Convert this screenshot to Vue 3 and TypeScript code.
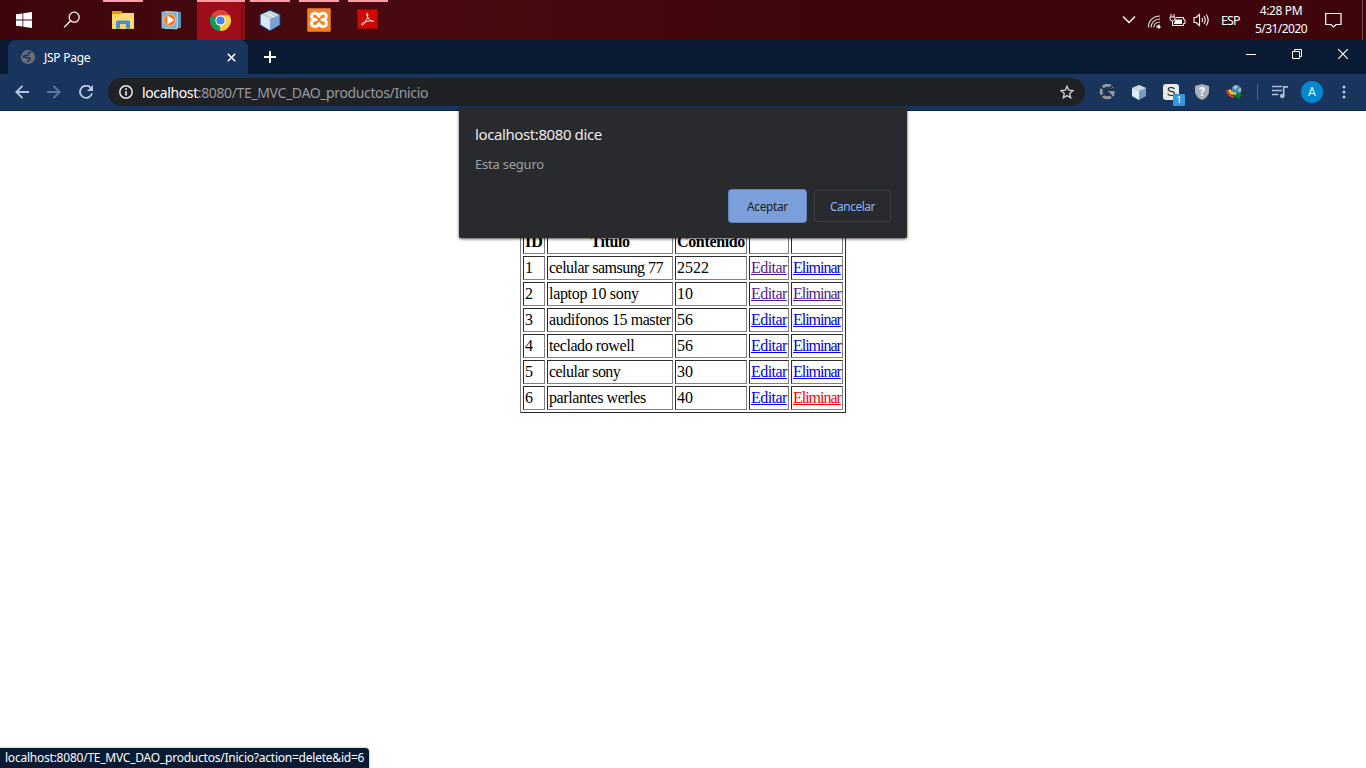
<script setup lang="ts">
interface Product {
  id: number
  title: string
  content: string
  edit: string
  remove: string
}

const products: Product[] = [
  { id: 1, title: 'celular samsung 77', content: '2522', edit: 'visited', remove: 'link' },
  { id: 2, title: 'laptop 10 sony', content: '10', edit: 'visited', remove: 'visited' },
  { id: 3, title: 'audifonos 15 master', content: '56', edit: 'link', remove: 'link' },
  { id: 4, title: 'teclado rowell', content: '56', edit: 'link', remove: 'link' },
  { id: 5, title: 'celular sony', content: '30', edit: 'link', remove: 'link' },
  { id: 6, title: 'parlantes werles', content: '40', edit: 'link', remove: 'active' },
]
</script>

<template>
  <div class="screen">
    <header class="taskbar">
      <div class="task start">
        <svg width="16" height="16" viewBox="0 0 16 16" fill="#fff"><path d="M0 2.3 6.5 1.4V7.5H0zM7.3 1.3 16 0V7.5H7.3zM0 8.4H6.5V14.6L0 13.7zM7.3 8.4H16V16L7.3 14.8z" /></svg>
      </div>
      <div class="task find">
        <svg width="18" height="18" viewBox="0 0 18 18" fill="none" stroke="#fff" stroke-width="1.3"><circle cx="11.2" cy="6.2" r="5" /><path d="M7.5 9.8 1.2 16.4" /></svg>
      </div>
      <div class="task open">
        <svg width="22" height="20" viewBox="0 0 22 20">
          <path d="M0 1H9l1.5 2H22v16H0z" fill="#f6c443" /><path d="M0 1H9l1.5 2L9 4H0z" fill="#e3a000" /><path d="M0 4.5H9L11 3H22V18H0z" fill="#fddb73" />
          <path d="M4 18.6V12q0-1.5 1.5-1.5h11Q18 10.500 18 12v6.600h-4V14H8v4.600z" fill="#3b94d9" /><path d="M8 14h6v4.600H8z" fill="#f7d266" />
        </svg>
      </div>
      <div class="task media-player">
        <svg width="20" height="20" viewBox="0 0 20 20">
          <path d="M4 1 20 2V18L4 19z" fill="#a8cadd" /><path d="M17 2h3v16h-3z" fill="#5b91b2" /><path d="M1 2H16V19L1 18z" fill="#79b0d1" stroke="#b9dcec" stroke-width=".7" />
          <circle cx="8.700" cy="10" r="6" fill="#ef7a25" stroke="#fac48e" /><path d="M6.500 5.600v8.800l6.600-4.400z" fill="#fff" />
        </svg>
      </div>
      <div class="task current">
        <svg width="23" height="23" viewBox="0 0 24 24">
          <path d="M12 12 2.470 6.500A11 11 0 0 1 21.530 6.500z" fill="#db4437" /><path d="M12 12V23A11 11 0 0 1 2.470 6.500z" fill="#0f9d58" /><path d="M12 12 21.530 6.500A11 11 0 0 1 12 23z" fill="#ffcd40" />
          <path d="M12 6.500h9.530L17 12z" fill="#ffcd40" /><path d="M2.470 6.500 7.200 14.700 12 12z" fill="#0f9d58" /><path d="M16.800 14.700 12 23 11 15z" fill="#ffcd40" />
          <circle cx="12" cy="12" r="5.400" fill="#fff" /><circle cx="12" cy="12" r="4.300" fill="#4285f4" />
        </svg>
      </div>
      <div class="task open">
        <svg width="22" height="23" viewBox="0 0 22 23"><path d="M11 1 21 5.500V16L11 22 1 16V5.500z" fill="#c5dff2" stroke="#173777" stroke-width="1.200" /><path d="M11 2 20 6 11 10 2 6z" fill="#c6d6cd" /><path d="M2 6 11 10V21L2 15.500z" fill="#d6e8f6" /><path d="M20 6 11 10V21L20 15.500z" fill="#7f9fce" /><path d="m7 4 8 4" stroke="#f1f7ed" stroke-width="1" /></svg>
      </div>
      <div class="task open">
        <svg width="24" height="24" viewBox="0 0 24 24"><rect width="24" height="24" rx="2" fill="#fa8023" /><rect x=".5" y=".5" width="23" height="23" rx="2" fill="none" stroke="#bf662e" /><path d="M12 8.200C10.500 4 4.200 4.500 4.600 8.500c.1 1.400.9 2.200 2.300 2.700M6.900 12.200c-1.700.6-2.500 1.600-2.400 3.300C4.800 19.500 10.500 19.500 12 15.800M12 8.200C13.500 4 19.800 4.500 19.400 8.500c-.1 1.400-.9 2.200-2.300 2.700M17.100 12.200c1.700.6 2.500 1.600 2.400 3.300C19.200 19.500 13.500 19.500 12 15.800M6.500 11.700H9M15 11.700h2.500" fill="none" stroke="#fff" stroke-width="2.900" stroke-linejoin="round" stroke-linecap="round" /></svg>
      </div>
      <div class="task open adobe">
        <svg width="21" height="20" viewBox="0 0 21 20"><rect width="21" height="20" fill="#cd0805" /><rect x=".5" y=".5" width="20" height="19" fill="none" stroke="#990606" /><path d="M4.500 15.600C3.500 14 12.500 10.800 16.400 12 17.500 13.800 11 11.500 9.700 5.500 9.500 3.500 11.500 4 10.600 7.800 9.300 12.500 6 17.300 4.500 15.600z" fill="none" stroke="#fff" stroke-width=".95" /></svg>
      </div>
      <div class="tray">
        <svg class="chevron" width="14" height="10" viewBox="0 0 14 10" fill="none" stroke="#fff" stroke-width="1.300"><path d="m1 1.500 6 6 6-6" /></svg>
        <svg class="wifi" width="14" height="15" viewBox="0 0 14 15" fill="none" stroke="#ddd" stroke-width="1.100"><path d="M1.500 13.500C1 7 6 2 13 2M4 13.500C4 8.500 8 5 13 5M6.800 13.500C7 10.500 9 8 13 8M9.500 13.500Q10 11 13 11" /><circle cx="12" cy="13" r="1.600" fill="#fff" stroke="none" /></svg>
        <svg class="battery" width="17" height="13" viewBox="0 0 17 13" fill="none" stroke="#fff" stroke-width="1"><path d="M2 0v3M5 0v3M1 3h5v2Q5.500 7 3.500 7 1 7 1 4.500zM3.500 7v4.500H14.500V9.500h1.500V5.500h-1.500V3.500H7" /><path d="M6 5.500h7v4.500H5V8h1z" fill="#fff" stroke="none" /></svg>
        <svg class="speaker" width="17" height="14" viewBox="0 0 17 14" fill="none" stroke="#fff" stroke-width="1.100"><path d="M1 4.500h2l3.500-3v11L3 9.500H1zM9 5q1 2 0 4M11 3.200q2.500 3.800 0 7.600M13.200 1.500q4 5.500 0 11" /></svg>
        <span class="lang">ESP</span>
        <div class="clock"><span class="time">4:28 PM</span><span class="date">5/31/2020</span></div>
        <svg class="notice" width="17" height="17" viewBox="0 0 17 17" fill="none" stroke="#fff" stroke-width="1.200"><path d="M.7 1.500H16V12.500H11L8.500 15 6 12.500H.7z" /></svg>
        <i class="desktop-edge"></i>
      </div>
    </header>

    <div class="tabstrip">
      <div class="tab">
        <svg class="globe" width="14" height="14" viewBox="0 0 14 14"><circle cx="7" cy="7" r="7" fill="#6b7078" /><path d="M10.500 2.300Q8 1.500 7.500 3.300 8.500 5 6 5.500 3.500 4.500 2 6.500M2 7.500Q4 6.500 5.500 8 8 7.500 9 8.800 8.500 11 6 11.800" fill="none" stroke="#1a355d" stroke-width="1.500" /></svg>
        <span class="tab-title">JSP Page</span>
        <svg class="tab-close" width="9" height="9" viewBox="0 0 9 9" stroke="#fff" stroke-width="1.600"><path d="m.8.8 7.400 7.400M8.200.8.800 8.200" /></svg>
      </div>
      <svg class="new-tab" width="12" height="12" viewBox="0 0 12 12" stroke="#fff" stroke-width="2"><path d="M6 0v12M0 6h12" /></svg>
      <div class="window-controls">
        <svg width="10" height="10" viewBox="0 0 10 10" stroke="#fff"><path d="M0 5.500h10" /></svg>
        <svg width="10" height="10" viewBox="0 0 10 10" fill="none" stroke="#fff"><path d="M.5 2.500h7v7h-7zM2.500 2.500v-2h7v7h-2" /></svg>
        <svg width="10" height="10" viewBox="0 0 10 10" stroke="#fff" stroke-width="1.200"><path d="m0 0 10 10M10 0 0 10" /></svg>
      </div>
    </div>

    <div class="toolbar">
      <svg class="back" width="14" height="14" viewBox="0 0 14 14" fill="none" stroke="#b5c8e8" stroke-width="1.800"><path d="M14 7H1.500M7.500.8 1.300 7l6.200 6.200" /></svg>
      <svg class="forward" width="14" height="14" viewBox="0 0 14 14" fill="none" stroke="#5d779e" stroke-width="1.800"><path d="M0 7h12.500M6.500.8 12.700 7l-6.200 6.200" /></svg>
      <svg class="reload" width="14" height="14" viewBox="0 0 14 14"><path d="M11.500 2.500A6.100 6.100 0 1 0 13 8.500" fill="none" stroke="#b5c8e8" stroke-width="1.900" /><path d="M14 0v6H8z" fill="#b5c8e8" /></svg>
      <div class="omnibox">
        <svg width="14" height="14" viewBox="0 0 14 14"><circle cx="7" cy="7" r="6.200" fill="none" stroke="#e8eaed" stroke-width="1.500" /><path d="M6.200 3.300h1.700v1.700H6.200zM6.200 6.200h1.700v4.400H6.200z" fill="#e8eaed" /></svg>
        <span class="url"><b>localhost</b>:8080/TE_MVC_DAO_productos/Inicio</span>
        <svg class="star" width="14" height="14" viewBox="0 0 14 14" fill="none" stroke="#cfd2d7" stroke-width="1.300"><path d="m7 1.200 1.700 4 4.300.4-3.300 2.900 1 4.300L7 10.600l-3.700 2.200 1-4.300L1 5.600l4.300-.4z" /></svg>
      </div>
      <div class="extensions">
        <svg width="16" height="16" viewBox="0 0 16 16"><path d="M13.500 3.800A6.300 6.300 0 1 0 14 10.500V8.500H9" fill="none" stroke="#9298a0" stroke-width="3" /><path d="m1 2 4 3.500M1 13.500l4-3.500M9 8l5 6M10 5l4-4" stroke="#29323d" stroke-width="1.800" /></svg>
        <svg width="16" height="16" viewBox="0 0 16 16"><path d="m8 1 7 3v8l-7 4-7-4V4z" fill="#759cc9" /><path d="m8 1 7 3-7 3-7-3z" fill="#c9d9db" /><path d="M1 4 8 7v9l-7-4z" fill="#ddecf6" /></svg>
        <div class="session">
          <svg width="16" height="16" viewBox="0 0 16 16"><rect width="16" height="16" rx="3" fill="#e9e9e9" /></svg>
          <span class="s-letter">S</span><span class="badge">1</span>
        </div>
        <div class="shield">
          <svg width="16" height="16" viewBox="0 0 16 16"><path d="M8 0 15 2v6q-.5 5-7 8Q1.500 13 1 8V2z" fill="#a9b0bc" /></svg>
          <span>?</span>
        </div>
        <svg class="downloader" width="17" height="16" viewBox="0 0 17 16"><circle cx="10.500" cy="6" r="5" fill="#4386b4" /><path d="M7 2.500 10 1l2 2-3 3zM12 5l3-1v3l-2 1z" fill="#a9bfc9" /><path d="M1.200 6Q1.500 11.500 8 13" fill="none" stroke="#cf3f23" stroke-width="2.200" /><path d="M3.500 5.500Q4 10 10 10" fill="none" stroke="#fac62d" stroke-width="2.600" /><path d="M6 10.200 11 11 10 8.500 16.500 10 12.500 15 11.500 13Q8 13.500 6 10.200z" fill="#16761a" /></svg>
      </div>
      <i class="divider"></i>
      <svg class="media" width="17" height="14" viewBox="0 0 17 14"><path d="M0 1.500h10M0 5.500h10M0 9.500h6.500" stroke="#a9bddb" stroke-width="1.700" /><path d="M11.700 11V1.800H16" fill="none" stroke="#a9bddb" stroke-width="1.700" /><circle cx="10.300" cy="11" r="2.300" fill="#a9bddb" /></svg>
      <span class="avatar">A</span>
      <svg class="menu" width="4" height="14" viewBox="0 0 4 14" fill="#b5c8e8"><circle cx="2" cy="2" r="1.500" /><circle cx="2" cy="7" r="1.500" /><circle cx="2" cy="12" r="1.500" /></svg>
    </div>

    <main class="page">
      <table>
        <colgroup><col class="c-id" /><col class="c-title" /><col class="c-content" /><col class="c-edit" /><col class="c-remove" /></colgroup>
        <thead>
          <tr><th>ID</th><th><span class="h-title">Titulo</span></th><th><span class="h-content">Contenido</span></th><th></th><th></th></tr>
        </thead>
        <tbody>
          <tr v-for="p in products" :key="p.id">
            <td>{{ p.id }}</td>
            <td><span :class="'title-' + p.id">{{ p.title }}</span></td>
            <td>{{ p.content }}</td>
            <td><a class="edit" :class="p.edit">Editar</a></td>
            <td><a class="remove" :class="p.remove">Eliminar</a></td>
          </tr>
        </tbody>
      </table>
    </main>

    <div class="dialog" role="alertdialog">
      <h1>localhost:8080 dice</h1>
      <p>Esta seguro</p>
      <div class="actions">
        <button class="accept">Aceptar</button>
        <button class="cancel">Cancelar</button>
      </div>
    </div>
    <div class="status"><span>localhost:8080/TE_MVC_DAO_productos/Inicio?action=delete&amp;id=6</span></div>
  </div>
</template>

<style>
html, body { margin: 0; overflow: hidden; background: #fff; }
</style>

<style scoped>
.screen { position: relative; width: 1366px; height: 768px; overflow: hidden; display: flex; flex-direction: column; background: #fff; font-family: "Noto Sans", "Open Sans", sans-serif; }
svg { display: block; flex: none; }
span { white-space: nowrap; }
.taskbar { height: 40px; display: flex; background: linear-gradient(90deg, #3e060b, #480a10 30%, #3e060b 60%, #3e060b); flex: none; }
.task { width: 49px; height: 40px; box-sizing: border-box; display: flex; align-items: center; justify-content: center; }
.start { width: 48px; }
.find { width: 50px; padding-right: 2px; }
.media-player { padding-right: 2px; }
.open { background: linear-gradient(#ff9ea8, #ff9ea8) 5px 0 / 40px 2px no-repeat; }
.adobe { padding-bottom: 2px; }
.current { background: linear-gradient(#ff9ea8, #ff9ea8) 1px 0 / 48px 2px no-repeat, linear-gradient(90deg, transparent 1px, #9d0e1a 1px, #9d0e1a 45px, #650914 45px, #650914 46px, #84101c 46px); }
.tray { margin-left: auto; height: 40px; display: flex; align-items: center; color: #fff; font-size: 12px; }
.chevron { margin-right: 11px; }
.wifi { margin: 2px 8px 0 0; }
.battery { margin-right: 7px; }
.speaker { margin-right: 11px; }
.lang { width: 20px; font-size: 12.5px; letter-spacing: -.9px; margin-right: 12px; }
.clock { width: 56px; display: flex; flex-direction: column; align-items: center; line-height: 18px; margin-right: 16px; }
.time { letter-spacing: -.35px; }
.date { letter-spacing: -.55px; }
.notice { margin-right: 20px; }
.desktop-edge { width: 1px; height: 40px; background: #7b5054; margin-right: 3px; }

.tabstrip { height: 34px; flex: none; background: #0a1a33; display: flex; padding-left: 8px; }
.tab { width: 240px; box-sizing: border-box; height: 34px; background: #1a355d; border-radius: 8px 8px 0 0; display: flex; align-items: center; padding: 0 12px 0 13px; color: #fff; font-size: 12px; }
.tab-title { margin-left: 9px; letter-spacing: -.25px; }
.tab-close { margin-left: auto; }
.new-tab { margin: 11px 0 0 16px; }
.window-controls { margin: 9px 18px 0 auto; display: flex; gap: 36px; }
.toolbar { height: 37px; box-sizing: border-box; flex: none; background: #1a355d; border-bottom: 1px solid #0b2546; display: flex; align-items: center; padding-left: 15px; }
.forward { margin-left: 18px; }
.reload { margin-left: 18px; }
.omnibox { width: 977px; height: 28px; margin-left: 15px; border-radius: 14px; background: #202124; box-sizing: border-box; display: flex; align-items: center; padding: 0 11px; }
.url { margin-left: 9px; padding-top: 1px; color: #969a9f; font-size: 14px; line-height: 21px; letter-spacing: -.37px; }
.url b { color: #fff; font-weight: 400; }
.star { margin-left: auto; }
.extensions { display: flex; align-items: center; gap: 16px; margin-left: 14px; }
.downloader { margin-left: 0; }
.session, .shield { position: relative; width: 16px; height: 16px; }
.s-letter { position: absolute; left: 0; top: 0; width: 16px; font: 13px/15px "Liberation Sans", sans-serif; color: #222; text-align: center; }
.badge { position: absolute; left: 10px; top: 10px; width: 12px; height: 12px; border-radius: 1px; background: #3498db; color: #fff; font: 9px/13px Roboto, sans-serif; text-align: center; }
.shield { margin-left: -1px; }
.shield span { position: absolute; inset: 0; font: bold 12px/16px Roboto, sans-serif; color: #fff; text-align: center; }
.divider { width: 1px; height: 16px; background: #4c678d; margin-left: 14px; }
.media { margin-left: 14px; }
.avatar { width: 22px; height: 22px; margin-left: 12px; border-radius: 50%; background: #0288d1; color: #fff; font: 12px/22px Roboto, sans-serif; text-align: center; }
.menu { margin-left: 19px; }

.page { flex: 1; padding-top: 116px; color: #000; font: 16px/18px "Liberation Serif", serif; }
table { table-layout: fixed; width: 326px; margin: 0 auto; border-collapse: separate; border-spacing: 2px; border: 1px solid; border-color: #808080 #2c2c2c #2c2c2c #808080; }
.c-id { width: 22px; } .c-title { width: 126px; } .c-content { width: 72px; } .c-edit { width: 40px; } .c-remove { width: 52px; }
th, td { height: 24px; box-sizing: border-box; padding: 1px; border: 1px solid; border-color: #2c2c2c #808080 #808080 #2c2c2c; white-space: nowrap; line-height: 20px; }
a { text-decoration: underline; }
.h-title { letter-spacing: -.4px; }
.h-content { letter-spacing: -.35px; }
.title-1 { letter-spacing: -.53px; }
.title-2 { letter-spacing: -.32px; }
.title-3 { letter-spacing: -.42px; }
.title-4 { letter-spacing: -.42px; }
.title-5 { letter-spacing: -.54px; }
.title-6 { letter-spacing: -.42px; }
.edit { letter-spacing: -.55px; }
.remove { letter-spacing: -1.02px; }
.link { color: #0000ee; } .visited { color: #551a8b; } .active { color: #ff0000; }

.dialog { position: absolute; left: 459px; top: 107px; width: 448px; height: 131px; box-sizing: border-box; padding: 15px 16px 16px; background: #292a2d; border-radius: 2px; box-shadow: 0 1px 3px rgba(0,0,0,.7); display: flex; flex-direction: column; }
.dialog h1 { margin: 0; font-size: 15px; line-height: 24px; font-weight: 400; letter-spacing: -.4px; color: #e8eaed; }
.dialog p { margin: 8px 0 0; font-size: 13px; line-height: 20px; letter-spacing: -.22px; color: #9aa0a6; }
.actions { display: flex; justify-content: flex-end; gap: 8px; margin-top: 16px; }
button { height: 32px; box-sizing: border-box; padding: 0; border-radius: 3px; font: 12px "Noto Sans", sans-serif; letter-spacing: -.4px; }
.accept { width: 77px; border: 0; background: #7b9fda; color: #202124; box-shadow: 0 0 0 1px #6284ba; }
.cancel { width: 77px; border: 1px solid #3c4043; background: transparent; color: #8ab4f8; letter-spacing: -.5px; }
.status { position: absolute; left: 0; bottom: 0; width: 369px; height: 20px; box-sizing: border-box; padding-left: 5px; border-radius: 0 4px 0 0; background: #0a1a33; color: #fff; font-size: 12px; line-height: 20px; letter-spacing: -.23px; box-shadow: 0 0 2px #777; }
</style>
